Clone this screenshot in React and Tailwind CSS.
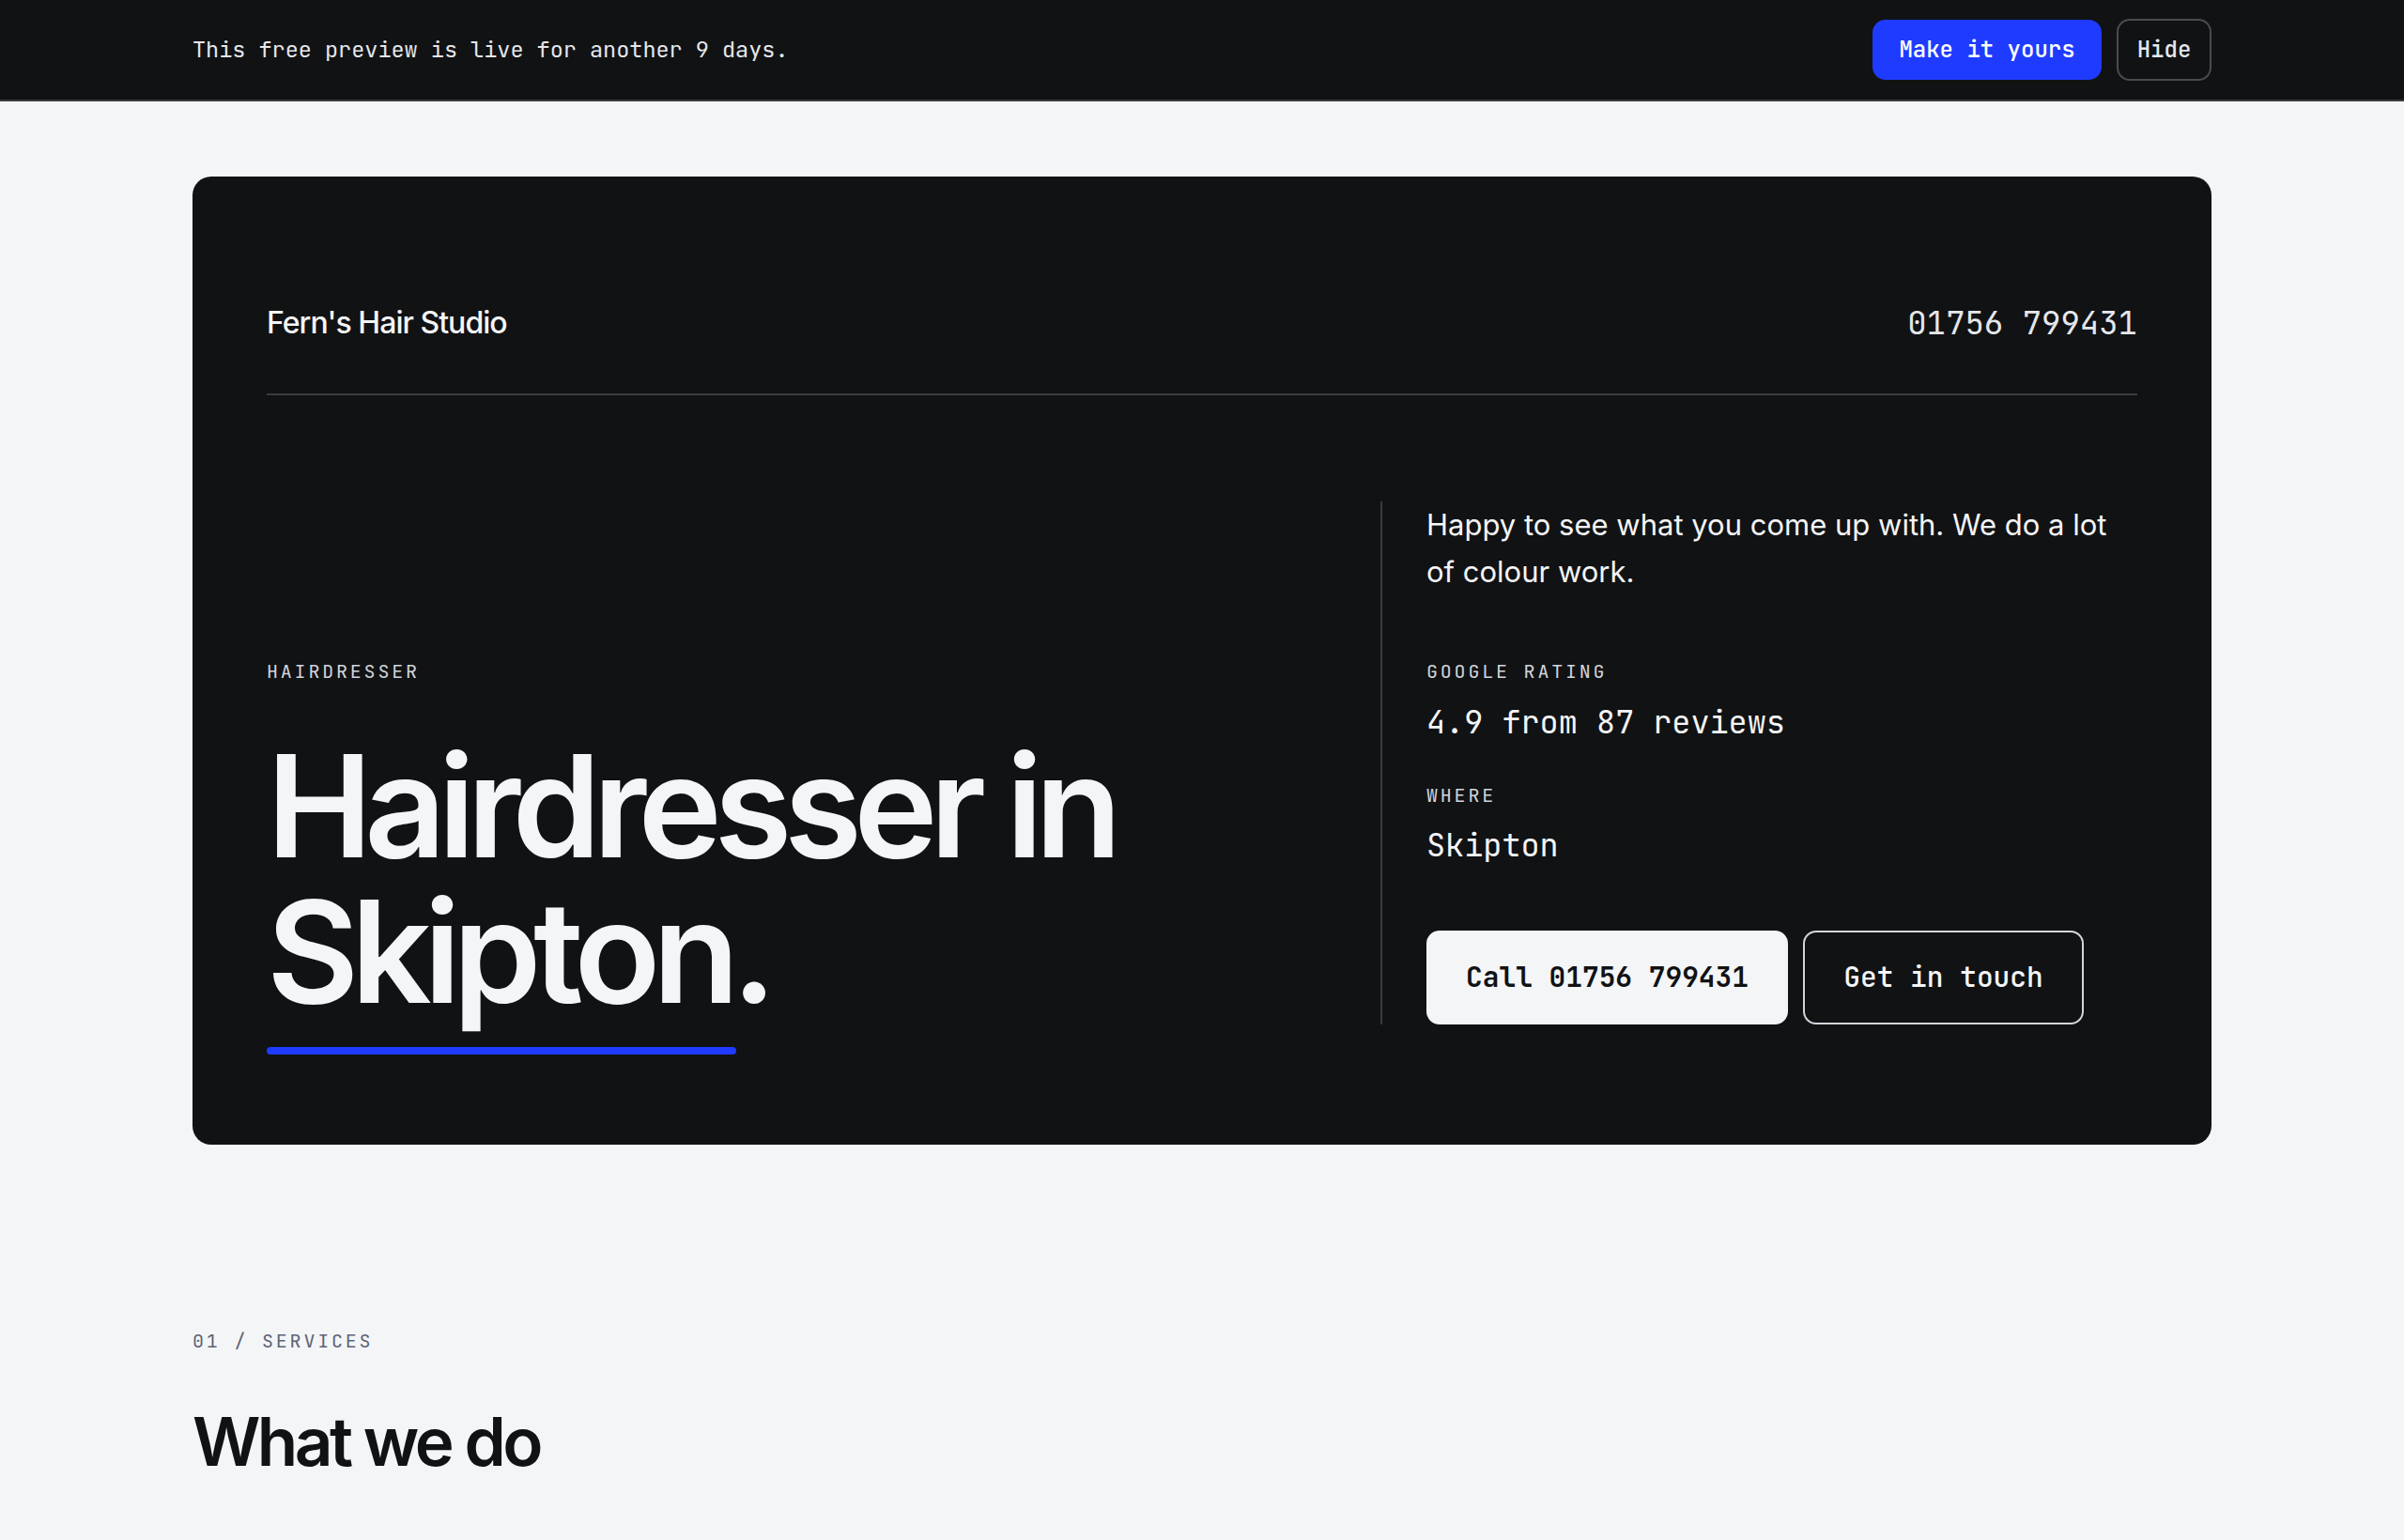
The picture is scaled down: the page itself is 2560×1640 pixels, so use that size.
import React from "react";

const mono = { fontFamily: '"JetBrains Mono", "DejaVu Sans Mono", monospace' };
const sans = { fontFamily: 'Inter, "Noto Sans", sans-serif' };

export default function App() {
  return (
    <div className="min-h-screen bg-[#f4f5f7]" style={sans}>
      <div className="bg-[#111214] border-b-2 border-[#3a3b3f]">
        <div className="mx-[205px] h-[106px] flex items-center justify-between">
          <p className="text-[23.5px] text-[#e5e7eb]" style={mono}>
            This free preview is live for another 9 days.
          </p>
          <div className="flex items-center gap-4">
            <button
              className="h-[64px] w-[244px] rounded-[14px] bg-[#1f3bff] text-white text-[24px] font-medium"
              style={mono}
            >
              Make it yours
            </button>
            <button
              className="h-[66px] w-[101px] rounded-[14px] border-2 border-[#4a4b50] text-[#e5e7eb] text-[24px] font-medium"
              style={mono}
            >
              Hide
            </button>
          </div>
        </div>
      </div>

      <main className="mx-[205px] pt-[80px]">
        <section className="rounded-[20px] bg-[#111214] px-[79px] pt-[130px] pb-[128px]">
          <header className="flex items-center justify-between pb-[50px] border-b-2 border-[#3a3b3f]">
            <div className="text-[32px] leading-[48px] font-medium tracking-[-0.03em] text-[#f4f5f7]">
              Fern's Hair Studio
            </div>
            <div className="text-[34px] leading-[51px] text-[#e5e7eb]" style={mono}>
              01756 799431
            </div>
          </header>

          <div className="grid grid-cols-[1fr_806px] pt-[113px]">
            <div className="flex flex-col justify-end">
              <div
                className="text-[20px] leading-[30px] tracking-[0.14em] text-[#d1d5db]"
                style={mono}
              >
                HAIRDRESSER
              </div>
              <h1 className="relative mt-[51px] text-[151px] leading-[155px] font-semibold tracking-[-0.056em] text-[#f4f5f7]">
                Hairdresser in
                <br />
                Skipton.
                <span className="absolute left-0 -bottom-[32px] h-[8px] w-[500px] rounded-full bg-[#1f3bff]" />
              </h1>
            </div>

            <div className="border-l-2 border-[#3a3b3f] pl-[47px]">
              <p className="text-[31px] leading-[50px] text-[#f4f5f7]">
                Happy to see what you come up with. We do a lot of colour work.
              </p>
              <div
                className="mt-[66px] text-[20px] leading-[30px] tracking-[0.14em] text-[#d1d5db]"
                style={mono}
              >
                GOOGLE RATING
              </div>
              <div className="mt-[14px] text-[33.5px] leading-[50px] text-[#f4f5f7]" style={mono}>
                4.9 from 87 reviews
              </div>
              <div
                className="mt-[38px] text-[20px] leading-[30px] tracking-[0.14em] text-[#d1d5db]"
                style={mono}
              >
                WHERE
              </div>
              <div className="mt-[13px] text-[33.5px] leading-[50px] text-[#f4f5f7]" style={mono}>
                Skipton
              </div>
              <div className="mt-[66px] flex gap-4">
                <button
                  className="h-[100px] w-[385px] rounded-[14px] bg-[#f4f5f7] text-[#111214] text-[29.5px] font-semibold"
                  style={mono}
                >
                  Call 01756 799431
                </button>
                <button
                  className="h-[100px] w-[299px] rounded-[14px] border-2 border-[#d1d5db] text-[#f4f5f7] text-[29.5px] font-medium"
                  style={mono}
                >
                  Get in touch
                </button>
              </div>
            </div>
          </div>
        </section>

        <section className="pt-[194px] pb-[120px]">
          <div
            className="text-[20px] leading-[30px] tracking-[0.14em] text-[#5b6474]"
            style={mono}
          >
            01 / SERVICES
          </div>
          <h2 className="mt-[52px] text-[71px] leading-[80px] font-semibold tracking-[-0.05em] text-[#111214]">
            What we do
          </h2>
        </section>
      </main>
    </div>
  );
}
